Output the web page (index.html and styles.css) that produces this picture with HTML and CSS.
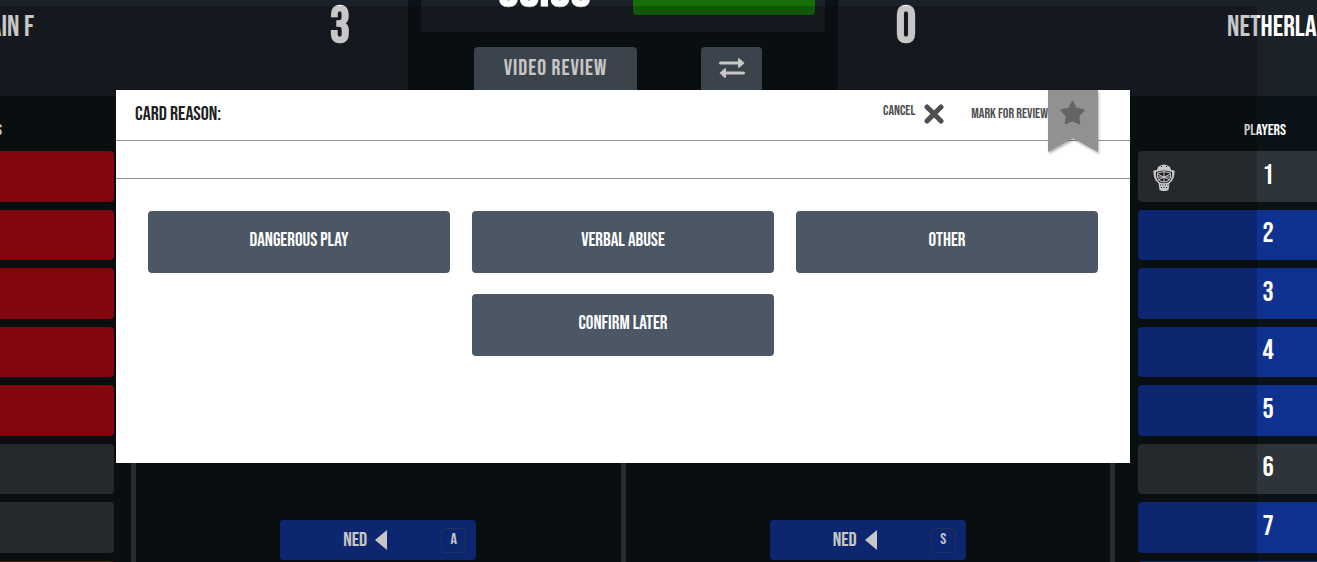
FILE: index.html
```html
<!DOCTYPE html>
<html lang="en">
<head>
  <meta charset="UTF-8">
  <meta name="viewport" content="width=device-width, initial-scale=1.0">
  <title>Match control</title>
  <link rel="stylesheet" href="styles.css">
</head>
<body>

  <header class="scoreboard">
    <div class="team team-home">
      <h2 class="team-name">SPAIN F</h2>
      <span class="score">3</span>
    </div>

    <div class="match">
      <div class="clock-panel">
        <span class="clock">00:00</span>
        <button class="start" aria-label="Start clock"></button>
      </div>
      <div class="match-actions">
        <button class="action video">VIDEO REVIEW</button>
        <button class="action swap" aria-label="Swap sides">
          <svg width="26" height="20" viewBox="0 0 26 20">
            <path d="M1.500 5H20M24.500 15H6" fill="none" stroke="currentColor" stroke-width="3" stroke-linecap="round"/>
            <path d="M19 0.500Q20 0 21 1L25.500 5L21 9.200Q20 10 19 9.500ZM7 10.500Q6 10 5 11L0.500 15L5 19.200Q6 20 7 19.500Z" fill="currentColor"/>
          </svg>
        </button>
      </div>
    </div>

    <div class="team team-away">
      <span class="score">0</span>
      <h2 class="team-name">NETHERLANDS</h2>
    </div>
  </header>

  <main class="board">
    <section class="players home">
      <h3 class="players-title">PLAYERS</h3>
      <div class="player-list">
        <button class="player red" aria-label="Home player 1"></button>
        <button class="player red" aria-label="Home player 2"></button>
        <button class="player red" aria-label="Home player 3"></button>
        <button class="player red" aria-label="Home player 4"></button>
        <button class="player red" aria-label="Home player 5"></button>
        <button class="player grey" aria-label="Home player 6"></button>
        <button class="player grey" aria-label="Home player 7"></button>
        <button class="player red" aria-label="Home player 8"></button>
      </div>
    </section>

    <section class="field">
      <div class="half">
        <button class="attack">NED <span class="arrow"></span><kbd>A</kbd></button>
      </div>
      <div class="half">
        <button class="attack">NED <span class="arrow"></span><kbd>S</kbd></button>
      </div>
    </section>

    <section class="players away">
      <h3 class="players-title">PLAYERS</h3>
      <div class="player-list">
        <button class="player grey keeper">
          <svg class="mask" width="22" height="27" viewBox="0 0 22 27">
            <path d="M5 3Q11-2 17 3L18 6L21.500 6.500Q22 13 19 17L16.500 19L15.500 26L13 27H9L6.500 26L5.500 19L3 17Q0 13 0.500 6.500L4 6Z" fill="currentColor"/>
            <path d="M3 8Q11 5 19 8Q20 15 15 18.500Q11 20 7 18.500Q2 15 3 8Z" fill="#25292c"/>
            <path d="M4.500 9Q11 6 17.500 9Q18.500 14 15 17Q11 19 7 17Q3.500 14 4.500 9ZM11 7.500V18M4.500 10L17 16M17.500 10L5 16M4 13H18" fill="none" stroke="currentColor" stroke-width="1"/>
            <path d="M8 2.500H9M13 2.500H14M7 21H8M9.500 21H10.500M12 21H13M14.500 21H15.500M8 23.500H9M10.500 23.500H11.500M13 23.500H14" stroke="#25292c" stroke-width="1.200"/>
          </svg>
          1
        </button>
        <button class="player blue">2</button>
        <button class="player blue">3</button>
        <button class="player blue">4</button>
        <button class="player blue">5</button>
        <button class="player grey">6</button>
        <button class="player blue">7</button>
        <button class="player blue">8</button>
      </div>
    </section>
  </main>

  <!-- Card reason dialog -->
  <div class="overlay">
    <div class="dialog" role="dialog" aria-labelledby="dialogTitle">
      <div class="dialog-header">
        <h1 id="dialogTitle" class="dialog-title">CARD REASON:</h1>
        <button class="cancel">
          <span class="cancel-label">CANCEL</span>
          <svg width="20" height="20" viewBox="0 0 20 20">
            <path d="M3 3L17 17M17 3L3 17" stroke="currentColor" stroke-width="5" stroke-linecap="round"/>
          </svg>
        </button>
        <button class="review">
          <span>MARK FOR REVIEW</span>
          <svg class="ribbon" width="50" height="62" viewBox="0 0 50 62">
            <path d="M0 0H50V62L25 48L0 62Z" fill="#919191"/>
            <path d="M24.500 11.500L28.200 18.500L36 20L30.500 26L31.500 33.500L24.500 30.500L17.500 33.500L18.500 26L13 20L20.800 18.500Z" fill="#646464" stroke="#646464" stroke-width="1.500" stroke-linejoin="round"/>
          </svg>
        </button>
      </div>
      <div class="dialog-sub"></div>
      <div class="reasons">
        <button class="reason">DANGEROUS PLAY</button>
        <button class="reason">VERBAL ABUSE</button>
        <button class="reason">OTHER</button>
        <button class="reason later">CONFIRM LATER</button>
      </div>
    </div>
  </div>

</body>
</html>
```
FILE: styles.css
```css
* {
  box-sizing: border-box;
}

body {
  margin: 0;
  height: 100vh;
  overflow: hidden;
  display: flex;
  flex-direction: column;
  background: #0b1217;
  color: #fff;
  font-family: "Bebas Neue", "Liberation Sans Narrow", "Liberation Sans", sans-serif;
}

h1, h2, h3 {
  margin: 0;
  font-weight: normal;
}

button {
  padding: 0;
  border: none;
  border-radius: 4px;
  color: inherit;
  font: inherit;
  cursor: pointer;
}

/* Scoreboard */
.scoreboard {
  display: grid;
  grid-template-columns: 408fr 430fr 479fr;
  height: 96px;
}

.team {
  display: flex;
  min-width: 0;
  overflow: hidden;
  background: #1a2128;
}

.team-home {
  justify-content: flex-end;
  padding-right: 58px;
  gap: 296px;
}

.team-away {
  padding-left: 58px;
  gap: 311px;
}

.team-name {
  font-size: 29px;
  line-height: 56px;
  white-space: nowrap;
}

.score {
  font-size: 50px;
  font-weight: bold;
  line-height: 54px;
}

.match {
  padding: 0 13px;
}

.clock-panel {
  display: flex;
  align-items: flex-end;
  justify-content: flex-end;
  gap: 42px;
  height: 32px;
  padding: 0 10px 17px 0;
  background: #1a2128;
}

.clock {
  font-size: 52px;
  font-weight: bold;
  line-height: 48px;
}

.start {
  width: 182px;
  height: 40px;
  background: #147007;
}

.match-actions {
  display: flex;
  justify-content: center;
  gap: 64px;
  padding: 15px 10px 0 0;
}

.action {
  height: 49px;
  padding-bottom: 7px;
  background: #4b5863;
}

.video {
  width: 163px;
  font-size: 22px;
  letter-spacing: 1px;
}

.swap {
  width: 61px;
}

.swap svg {
  vertical-align: middle;
}

/* Players and field */
.board {
  flex: 1;
  min-height: 0;
  display: flex;
}

.players {
  flex: none;
  overflow: hidden;
}

.home {
  width: 114px;
  display: flex;
  flex-direction: column;
  align-items: flex-end;
}

.home .players-title {
  padding-right: 112px;
}

.away {
  width: 179px;
}

.players-title {
  flex: none;
  height: 55px;
  padding-top: 7px;
  font-size: 16px;
  line-height: 55px;
  text-align: center;
}

.away .players-title {
  width: 254px;
}

.player-list {
  flex: none;
  display: grid;
  grid-template-rows: repeat(8, 1fr);
  gap: 8px;
  width: 260px;
  height: 460px;
}

.player {
  position: relative;
  padding-bottom: 2px;
  font-size: 28px;
}

.red {
  background: #a50813;
}

.grey {
  background: #2e353a;
}

.blue {
  background: #0f3290;
}

.mask {
  position: absolute;
  left: 15px;
  top: 13px;
}

.field {
  flex: 1;
  display: flex;
  margin: 0 23px 0 17px;
  border: solid #33373a;
  border-width: 0 5px;
}

.half {
  flex: 1;
  display: flex;
  justify-content: center;
  align-items: flex-end;
  padding-bottom: 2px;
}

.half + .half {
  border-left: 5px solid #33373a;
}

.attack {
  display: flex;
  align-items: center;
  width: 196px;
  height: 40px;
  padding: 0 10px 0 63px;
  background: #0f3290;
  font-size: 20px;
}

.arrow {
  margin-left: 8px;
  border: solid transparent;
  border-width: 10px 12px 10px 0;
  border-right-color: #fff;
}

kbd {
  width: 25px;
  height: 25px;
  margin-left: auto;
  border: 1px solid #294272;
  border-radius: 4px;
  font: inherit;
  font-size: 16px;
  line-height: 22px;
}

/* Dialog */
.overlay {
  position: absolute;
  top: 6px;
  left: 0;
  right: 60px;
  bottom: 0;
  padding: 84px 127px 0 116px;
  background: rgba(4, 2, 0, 0.22);
}

.dialog {
  min-height: 373px;
  background: #fff;
  color: #1f1f1f;
}

.dialog-header {
  display: flex;
  height: 51px;
  padding: 0 32px 0 19px;
  border-bottom: 1px solid #929292;
}

.dialog-title {
  flex: 1;
  font-size: 20px;
  line-height: 48px;
}

.cancel, .review {
  display: flex;
  background: none;
  color: #4f4f4f;
  font-size: 14px;
  line-height: 48px;
}

.cancel {
  gap: 9px;
  margin-right: 27px;
}

.cancel-label {
  line-height: 42px;
}

.cancel svg {
  margin-top: 14px;
}

.ribbon {
  filter: drop-shadow(1px 2px 1px rgba(0, 0, 0, 0.3));
}

.dialog-sub {
  height: 38px;
  border-bottom: 1px solid #929292;
}

.reasons {
  display: grid;
  grid-template-columns: repeat(3, 1fr);
  gap: 21px 22px;
  padding: 32px;
}

.reason {
  height: 62px;
  padding-bottom: 4px;
  background: #4b5764;
  color: #fff;
  font-size: 19px;
}

.later {
  grid-column: 2;
}
```
